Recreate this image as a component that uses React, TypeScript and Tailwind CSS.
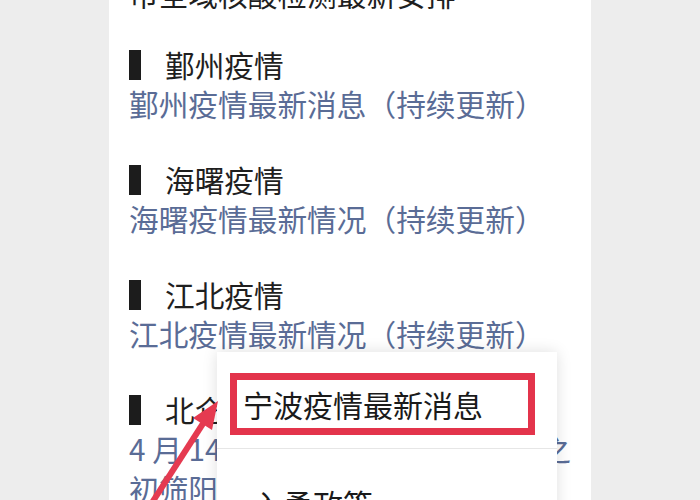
import React from "react";

const font = { fontFamily: '"Noto Sans CJK SC", "Noto Sans", sans-serif' };

function Section({ title, lines, first }: { title: string; lines: React.ReactNode[]; first?: boolean }) {
  return (
    <div className={first ? "mt-[32px]" : "mt-[37px]"}>
      <div className="flex items-center h-[38px]">
        <div className="w-[12px] h-[30px] bg-[#1c1c1c]" />
        <span className="ml-[24px] text-[29.7px] text-[#1f1f1f] leading-[38px]">{title}</span>
      </div>
      {lines.map((l, i) => (
        <div key={i} className="text-[29.7px] leading-[40px] text-[#5a6c96] whitespace-nowrap">
          {l}
        </div>
      ))}
    </div>
  );
}

export default function App() {
  return (
    <div className="relative w-[700px] h-[500px] overflow-hidden bg-[#ededed]" style={font}>
      <div className="mx-auto w-[482px] h-full bg-white px-[20px] flex flex-col">
        <div className="-mt-[26px] text-[29.7px] leading-[40px] text-[#1f1f1f] whitespace-nowrap">
          市全域核酸检测最新安排
        </div>
        <Section first title="鄞州疫情" lines={["鄞州疫情最新消息（持续更新）"]} />
        <Section title="海曙疫情" lines={["海曙疫情最新情况（持续更新）"]} />
        <Section title="江北疫情" lines={["江北疫情最新情况（持续更新）"]} />
        <Section
          title="北仑疫情"
          lines={[
            <div className="flex justify-between">
              <span>4 月 14 日北仑区新增</span>
              <span>之</span>
            </div>,
            "初筛阳性人员活动轨迹",
          ]}
        />
      </div>

      {/* popup menu */}
      <div className="absolute left-[217px] top-[352px] w-[340px] h-[170px] bg-white shadow-[0_0_14px_rgba(0,0,0,0.13)]">
        <div className="pt-[21px] px-[13px]">
          <div className="h-[62px] w-[305px] border-[7px] border-[#e3344b] flex items-center pl-[6px] text-[30px] text-[#1a1a1a] leading-none">
            宁波疫情最新消息
          </div>
        </div>
        <div className="mt-[13px] h-px bg-[#e6e6e6]" />
        <div className="mt-[34px] pl-[36px] text-[30px] leading-[40px] text-[#1a1a1a]">入甬政策</div>
      </div>

      {/* red arrow */}
      <svg className="absolute left-0 top-0 pointer-events-none" width="700" height="500" viewBox="0 0 700 500">
        <line x1="146" y1="512" x2="204" y2="422" stroke="#e53a50" strokeWidth="6" />
        <polygon points="218,401 212,430 193,418" fill="#e53a50" />
      </svg>
    </div>
  );
}
